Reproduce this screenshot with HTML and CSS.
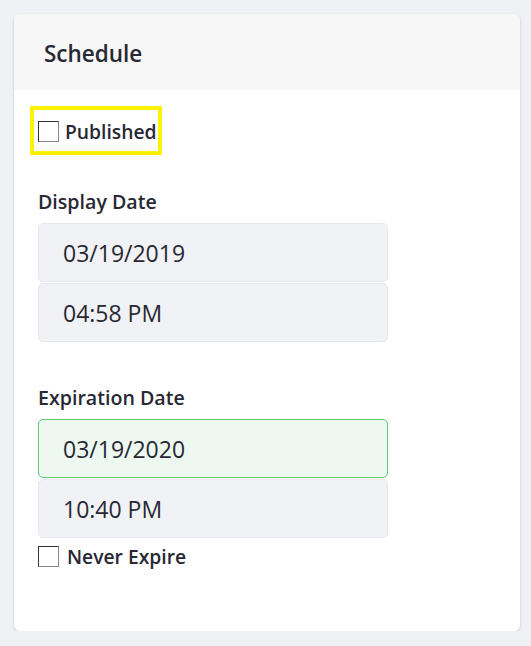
FILE: index.html
```html
<!DOCTYPE html>
<html>
<head>
<meta charset="utf-8">
<link rel="stylesheet" href="styles.css">
</head>
<body>
<div class="card">
  <div class="card-header">Schedule</div>
  <div class="card-body">
    <div class="highlight">
      <label class="check"><span class="box"></span><span>Published</span></label>
    </div>
    <div class="group display">
      <div class="label">Display Date</div>
      <div class="field">03/19/2019</div>
      <div class="field">04:58 PM</div>
    </div>
    <div class="group expiration">
      <div class="label">Expiration Date</div>
      <div class="field valid">03/19/2020</div>
      <div class="field">10:40 PM</div>
      <label class="check never"><span class="box"></span><span>Never Expire</span></label>
    </div>
  </div>
</div>
</body>
</html>
```

FILE: styles.css
```css
html, body {
  margin: 0;
  padding: 0;
  background: #f0f1f5;
  font-family: "Open Sans", "Noto Sans", sans-serif;
  color: #272833;
}
.card {
  margin: 14px 11px 0 14px;
  height: 617px;
  background: #fff;
  border-radius: 6px;
  box-shadow: 0 1px 3px rgba(0,0,0,0.18);
  overflow: hidden;
}
.card-header {
  height: 76px;
  box-sizing: border-box;
  background: #f7f7f7;
  padding-left: 30px;
  padding-top: 3px;
  display: flex;
  align-items: center;
  font-size: 22.5px;
  font-weight: 600;
}
.card-body {
  padding: 16px 24px 0 24px;
}
.highlight {
  display: inline-flex;
  border: 4px solid #fff200;
  padding: 8px 1px 6px 4px;
  margin-left: -8px;
}
.check {
  display: flex;
  align-items: center;
  gap: 6px;
  font-size: 19.3px;
  font-weight: 600;
}
.box {
  width: 19px;
  height: 19px;
  border: 1px solid #333;
  border-right-color: #8a8a8a;
  border-bottom-color: #8a8a8a;
  background: #fff;
  display: inline-block;
}
.group {
  margin-top: 34px;
}
.group.expiration {
  margin-top: 43px;
}
.label {
  font-size: 19.6px;
  font-weight: 600;
  margin-bottom: 8px;
  line-height: 26px;
}
.field {
  width: 350px;
  height: 59px;
  box-sizing: border-box;
  background: #f1f2f5;
  border: 1px solid #e7e7ed;
  border-radius: 5px;
  padding-left: 24px;
  display: flex;
  align-items: center;
  font-size: 23px;
  margin-bottom: 1px;
}
.field.valid {
  background: #edf9f0;
  border-color: #5aca75;
}
.never {
  margin-top: 5px;
  gap: 8px;
}
```
